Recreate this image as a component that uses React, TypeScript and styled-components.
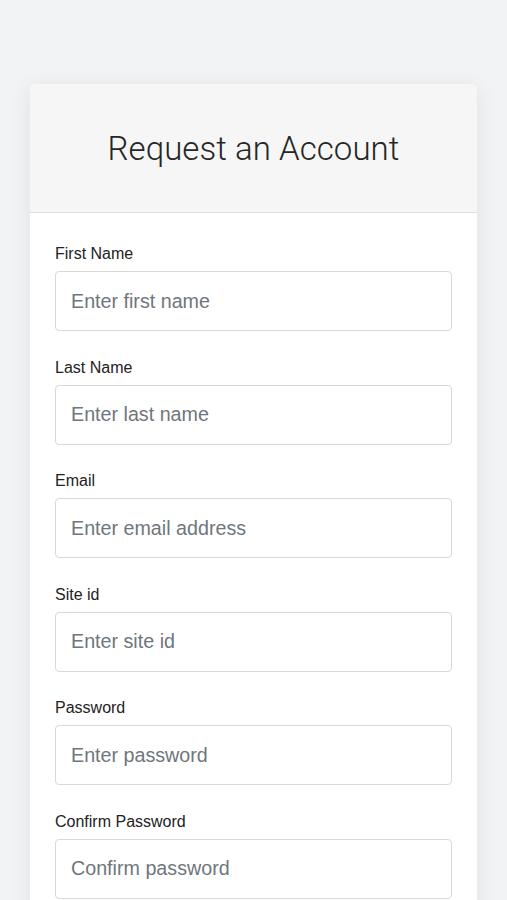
import React from "react"
import styled, { createGlobalStyle } from "styled-components"

const GlobalStyle = createGlobalStyle`
  html, body {
    margin: 0;
    padding: 0;
    background: #f2f3f5;
    font-family: "Liberation Sans", Arial, sans-serif;
    color: #212529;
  }
  * { box-sizing: border-box; }
`

const Page = styled.div`
  min-height: 900px;
  padding: 84px 30px 0;
  overflow: hidden;
`

const Card = styled.div`
  background: #fff;
  border-radius: 6px 6px 0 0;
  box-shadow: 0 4px 22px rgba(0, 0, 0, 0.08);
  overflow: hidden;
`

const Header = styled.div`
  height: 129px;
  background: #f6f6f6;
  border-bottom: 1px solid #dfdfdf;
  display: flex;
  align-items: center;
  justify-content: center;
`

const Title = styled.h1`
  margin: 0;
  font-family: Roboto, "Liberation Sans", sans-serif;
  font-weight: 300;
  font-size: 33px;
  color: #262626;
  letter-spacing: 0.05px;
`

const Form = styled.form`
  padding: 31px 25px 40px;
  display: flex;
  flex-direction: column;
  gap: 26.6px;
`

const Field = styled.label`
  display: flex;
  flex-direction: column;
  gap: 7px;
`

const LabelText = styled.span`
  font-size: 16px;
  line-height: 20px;
  color: #222;
`

const Input = styled.input`
  height: 60px;
  width: 100%;
  border: 1px solid #d8d8d8;
  border-radius: 4px;
  padding: 0 15px;
  font-family: "Liberation Sans", Arial, sans-serif;
  font-size: 19.7px;
  color: #333;
  background: #fff;
  outline: none;
  &::placeholder {
    color: #6f767d;
  }
`

const fields = [
  { label: "First Name", placeholder: "Enter first name", type: "text" },
  { label: "Last Name", placeholder: "Enter last name", type: "text" },
  { label: "Email", placeholder: "Enter email address", type: "email" },
  { label: "Site id", placeholder: "Enter site id", type: "text" },
  { label: "Password", placeholder: "Enter password", type: "password" },
  { label: "Confirm Password", placeholder: "Confirm password", type: "password" },
]

export default function App() {
  return (
    <Page>
      <GlobalStyle />
      <Card>
        <Header>
          <Title>Request an Account</Title>
        </Header>
        <Form onSubmit={(e) => e.preventDefault()}>
          {fields.map((f) => (
            <Field key={f.label}>
              <LabelText>{f.label}</LabelText>
              <Input type={f.type} placeholder={f.placeholder} />
            </Field>
          ))}
        </Form>
      </Card>
    </Page>
  )
}
